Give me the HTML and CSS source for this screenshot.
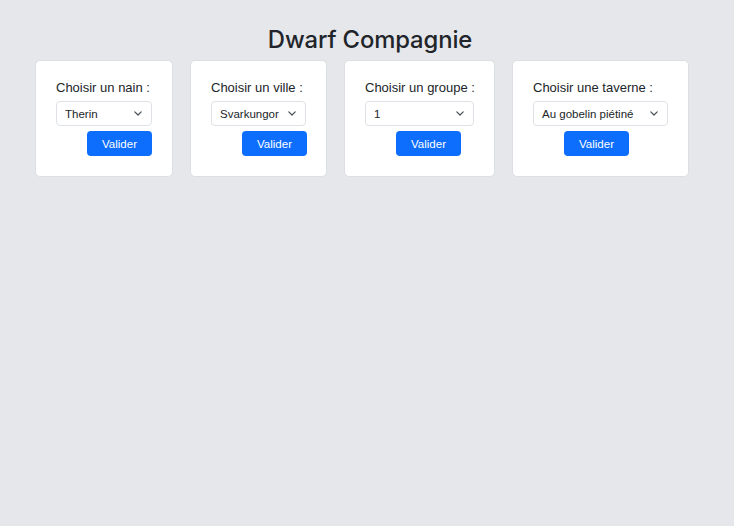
FILE: index.html
```html
<!DOCTYPE html>
<html lang="fr">
<head>
<meta charset="utf-8">
<title>Dwarf Compagnie</title>
<link rel="stylesheet" href="styles.css">
</head>
<body>
<h1 class="title">Dwarf Compagnie</h1>
<div class="cards">
  <form class="card">
    <div class="card-body body-nain">
      <label class="field-label" for="nain">Choisir un nain :</label>
      <div class="select-wrap">
        <select id="nain" class="form-select"><option>Therin</option></select>
        <svg class="chevron" width="8" height="5" viewBox="0 0 8 5"><path d="M0.8 0.8l3.2 3.2 3.2-3.2" fill="none" stroke="#495057" stroke-width="1.2" stroke-linecap="round" stroke-linejoin="round"/></svg>
      </div>
      <button type="button" class="btn">Valider</button>
    </div>
  </form>
  <form class="card">
    <div class="card-body body-ville">
      <label class="field-label" for="ville">Choisir un ville :</label>
      <div class="select-wrap">
        <select id="ville" class="form-select"><option>Svarkungor</option></select>
        <svg class="chevron" width="8" height="5" viewBox="0 0 8 5"><path d="M0.8 0.8l3.2 3.2 3.2-3.2" fill="none" stroke="#495057" stroke-width="1.2" stroke-linecap="round" stroke-linejoin="round"/></svg>
      </div>
      <button type="button" class="btn">Valider</button>
    </div>
  </form>
  <form class="card">
    <div class="card-body body-groupe">
      <label class="field-label" for="groupe">Choisir un groupe :</label>
      <div class="select-wrap">
        <select id="groupe" class="form-select"><option>1</option></select>
        <svg class="chevron" width="8" height="5" viewBox="0 0 8 5"><path d="M0.8 0.8l3.2 3.2 3.2-3.2" fill="none" stroke="#495057" stroke-width="1.2" stroke-linecap="round" stroke-linejoin="round"/></svg>
      </div>
      <button type="button" class="btn">Valider</button>
    </div>
  </form>
  <form class="card">
    <div class="card-body body-taverne">
      <label class="field-label" for="taverne">Choisir une taverne :</label>
      <div class="select-wrap">
        <select id="taverne" class="form-select"><option>Au gobelin piétiné</option></select>
        <svg class="chevron" width="8" height="5" viewBox="0 0 8 5"><path d="M0.8 0.8l3.2 3.2 3.2-3.2" fill="none" stroke="#495057" stroke-width="1.2" stroke-linecap="round" stroke-linejoin="round"/></svg>
      </div>
      <button type="button" class="btn">Valider</button>
    </div>
  </form>
</div>
</body>
</html>
```
FILE: styles.css
```css
* { box-sizing: border-box; }

body {
  margin: 0;
  background: #e5e7eb;
  color: #212529;
  font-family: "Liberation Sans", Arial, sans-serif;
}

.title {
  margin: 24px 0 5px;
  padding-left: 6px;
  text-align: center;
  font-family: Inter, "Liberation Sans", sans-serif;
  font-size: 23.8px;
  line-height: 31px;
  font-weight: 500;
  letter-spacing: -0.1px;
}

.cards {
  display: flex;
  align-items: flex-start;
  gap: 17px;
  padding-left: 35px;
}

.card {
  margin: 0;
  background: #fff;
  border: 1px solid #dcdfe3;
  border-radius: 5px;
  padding: 17px 20px 20px;
}

.card-body { display: flex; flex-direction: column; align-items: flex-start; }
.body-nain { width: 96px; }
.body-ville { width: 95px; }
.body-groupe { width: 109px; }
.body-taverne { width: 135px; }

.field-label {
  display: block;
  white-space: nowrap;
  font-size: 13px;
  line-height: 19px;
  margin-bottom: 4px;
}

.select-wrap {
  position: relative;
  width: 100%;
}

.form-select {
  display: block;
  width: 100%;
  height: 25px;
  margin: 0;
  padding: 0 22px 0 8px;
  border: 1px solid #dee2e6;
  border-radius: 4px;
  background: #fff;
  color: #212529;
  font-family: inherit;
  font-size: 11.5px;
  -webkit-appearance: none;
  appearance: none;
}

.chevron {
  position: absolute;
  right: 10px;
  top: 10px;
  pointer-events: none;
}

.btn {
  display: block;
  width: 65px;
  height: 25px;
  margin: 5px 0 0 31px;
  padding: 0;
  border: none;
  border-radius: 4px;
  background: #0d6efd;
  color: #fff;
  font-family: inherit;
  font-size: 11.5px;
}
```
